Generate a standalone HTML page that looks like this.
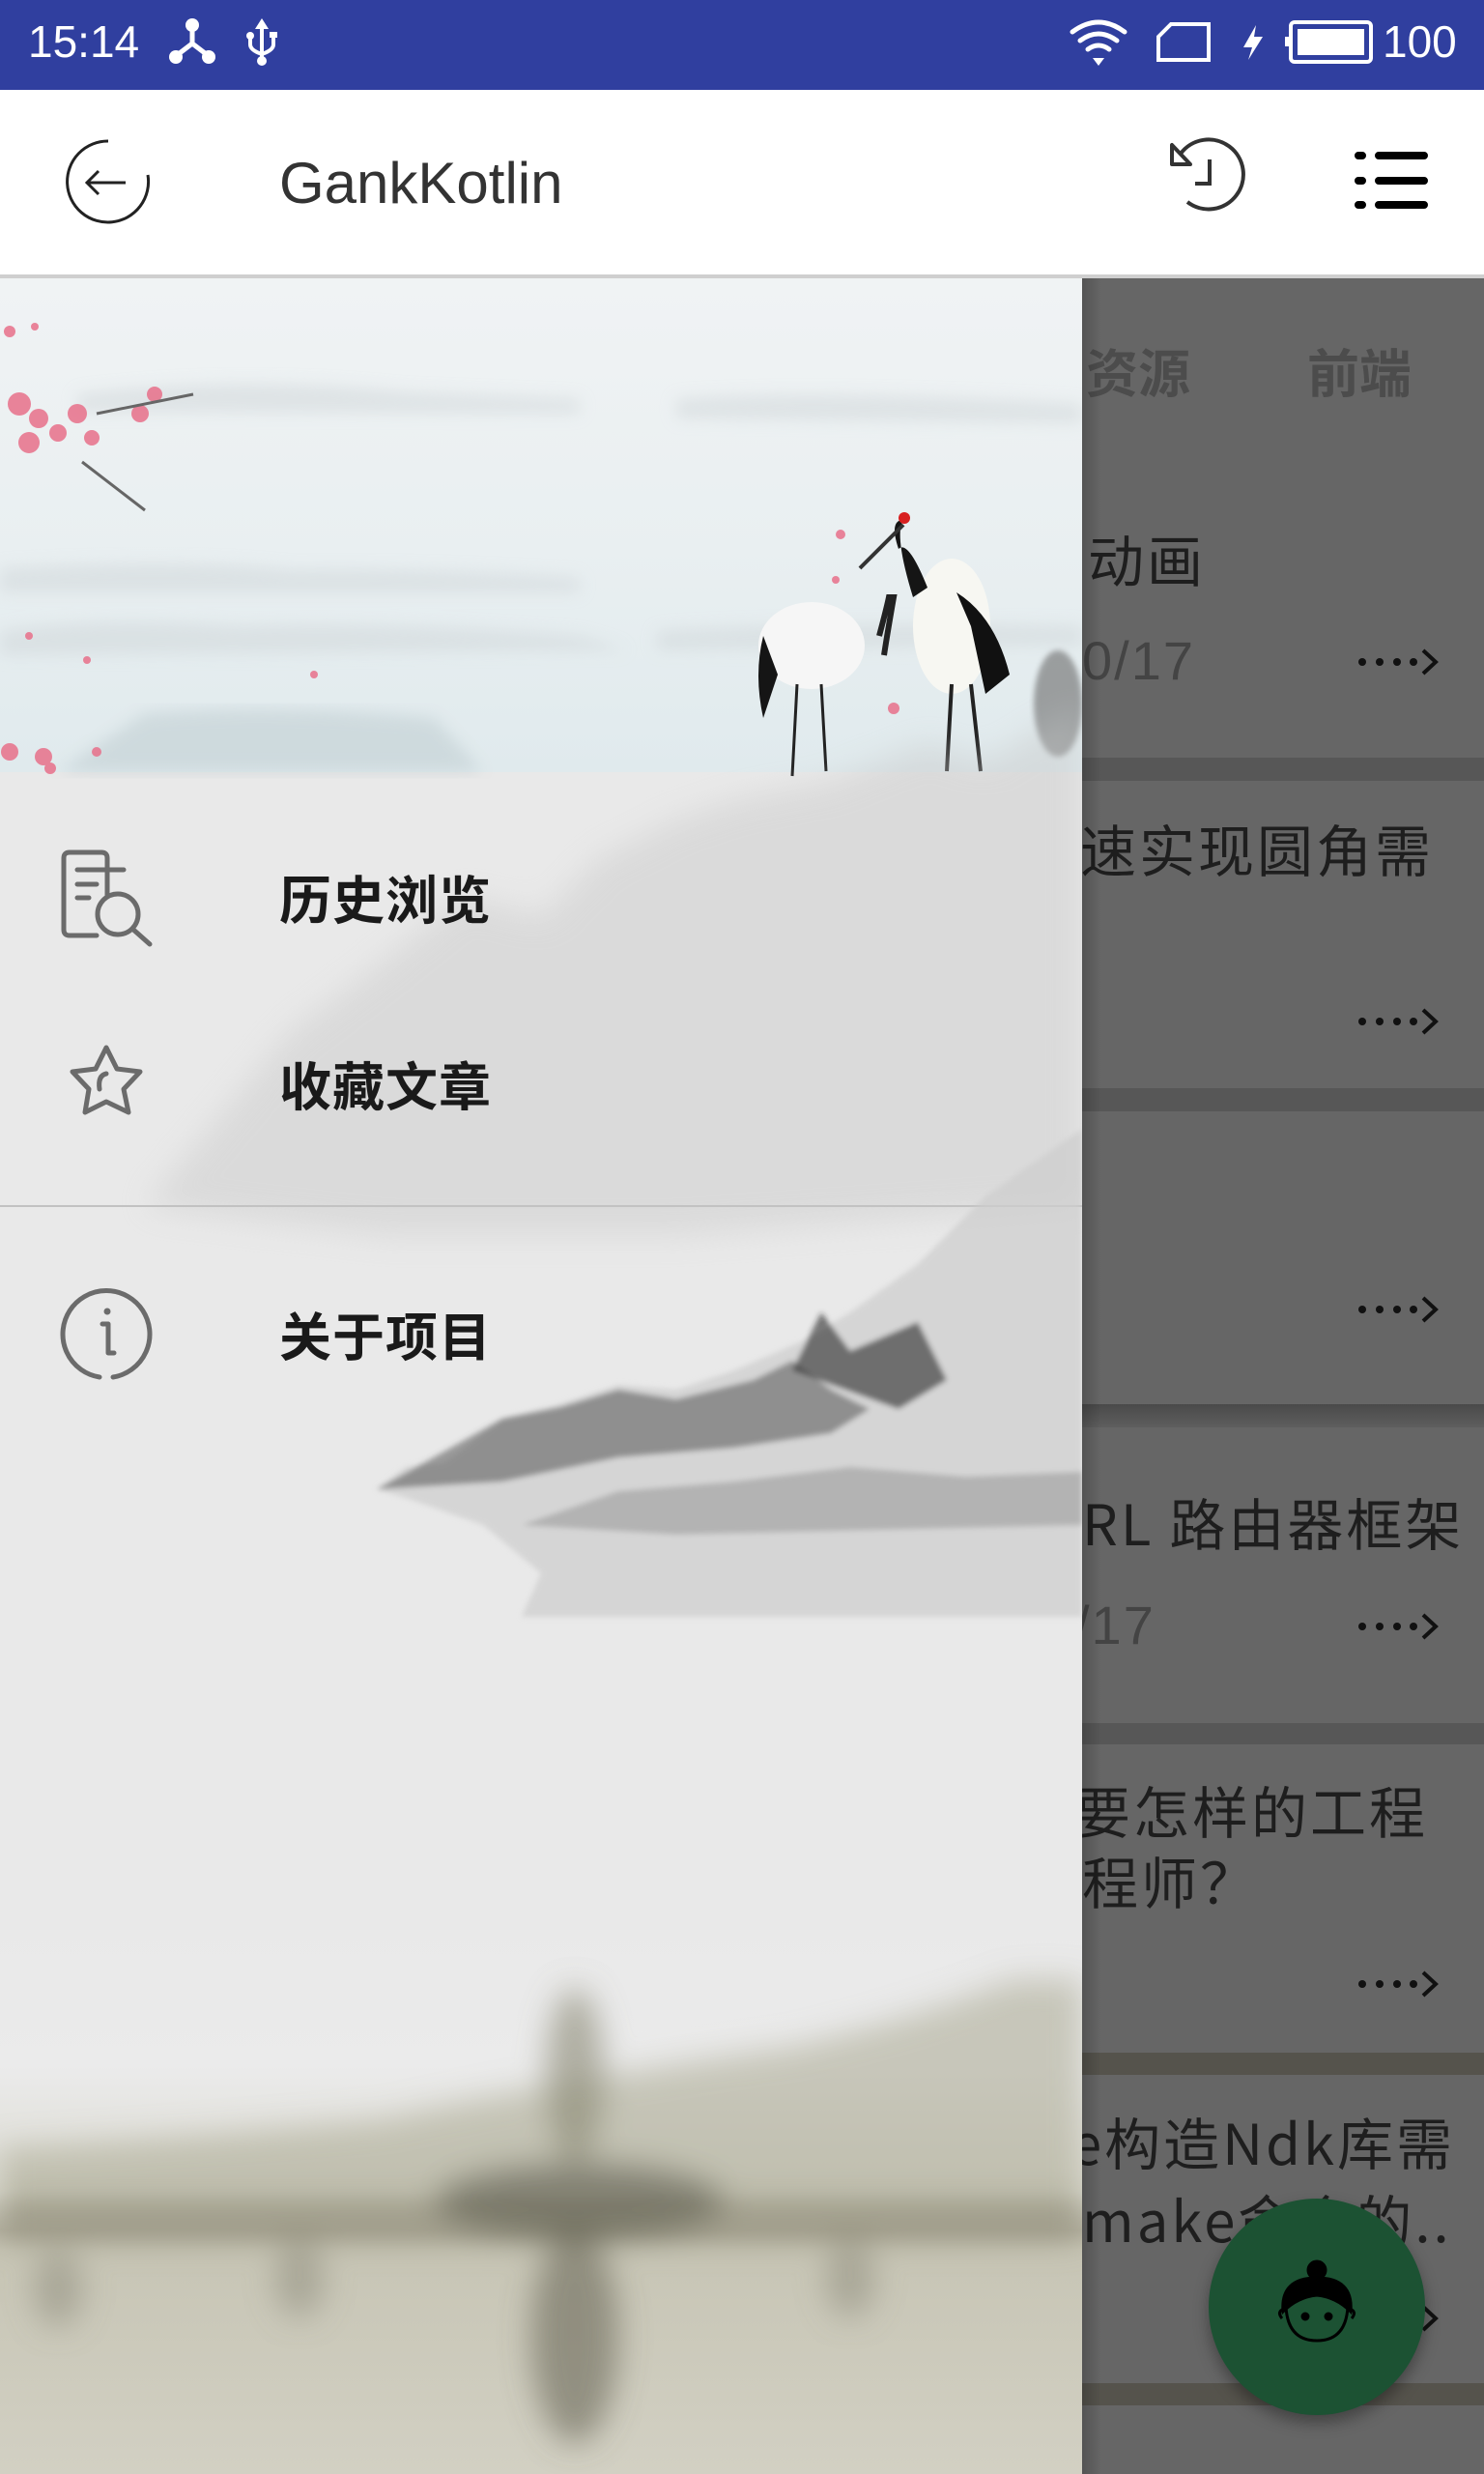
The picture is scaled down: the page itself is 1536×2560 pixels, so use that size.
<!DOCTYPE html>
<html><head><meta charset="utf-8">
<style>
*{margin:0;padding:0;box-sizing:border-box}
body{width:1536px;height:2560px;position:relative;overflow:hidden;background:#666;font-family:"Liberation Sans","Noto Sans CJK SC",sans-serif}
.a{position:absolute}
.cj{font-family:"Noto Sans CJK SC","WenQuanYi Zen Hei",sans-serif}
.t{color:#1e1e1e;font-size:58px;white-space:nowrap;line-height:1;letter-spacing:3px}
.d{color:#444;font-size:56px;white-space:nowrap;line-height:1;letter-spacing:2px}
.gap{left:1120px;width:416px;background:#575757}
.m{left:289px;font-size:54px;font-weight:bold;color:#1a1a1a;line-height:1;letter-spacing:1px}
</style></head><body>

<div class="a" style="left:1120px;top:288px;width:416px;height:2272px;background:#666"></div>
<div class="a cj" style="left:1124px;top:356px;font-size:54px;color:#4c4c4c;font-weight:bold;line-height:1">资源</div>
<div class="a cj" style="left:1353px;top:356px;font-size:54px;color:#4c4c4c;font-weight:bold;line-height:1">前端</div>

<div class="a gap" style="top:784px;height:24px"></div>
<div class="a gap" style="top:1126px;height:24px"></div>
<div class="a gap" style="top:1453px;height:24px;background:linear-gradient(#4a4a4a,#5e5e5e)"></div>
<div class="a gap" style="top:1783px;height:22px"></div>
<div class="a gap" style="top:2124px;height:23px;background:#55534c"></div>
<div class="a gap" style="top:2466px;height:23px;background:#55534c"></div>

<div class="a t cj" style="left:1126px;top:548px">动画</div>
<div class="a d" style="left:1120px;top:656px">0/17</div>
<div class="a t cj" style="left:1118px;top:848px">速实现圆角需</div>
<div class="a t cj" style="left:1120px;top:1545px">RL 路由器框架</div>
<div class="a d" style="left:1112px;top:1654px">/17</div>
<div class="a t cj" style="left:1112px;top:1843px">要怎样的工程</div>
<div class="a t cj" style="left:1120px;top:1916px">程师？</div>
<div class="a t cj" style="left:1108px;top:2186px">e构造Ndk库需</div>
<div class="a t cj" style="left:1120px;top:2266px">make命令的..</div>

<svg class="a" style="left:0;top:0" width="1536" height="2560">
<defs><g id="ar"><circle cx="4" cy="0" r="4"/><circle cx="22" cy="0" r="4"/><circle cx="40" cy="0" r="4"/><circle cx="57" cy="0" r="4"/><path d="M67 -12 L80 0 L67 12" fill="none" stroke="#111" stroke-width="4"/></g></defs>
<g fill="#111">
<use href="#ar" x="1406" y="685"/>
<use href="#ar" x="1406" y="1057"/>
<use href="#ar" x="1406" y="1355"/>
<use href="#ar" x="1406" y="1683"/>
<use href="#ar" x="1406" y="2053"/>
<use href="#ar" x="1406" y="2399"/>
</g>
</svg>

<div class="a" style="left:1120px;top:288px;width:20px;height:2272px;background:linear-gradient(90deg,rgba(0,0,0,.18),rgba(0,0,0,0))"></div>

<div class="a" style="left:0;top:288px;width:1120px;height:2272px;background:linear-gradient(#e9e9e9 0,#e9e9e9 1700px,#ebebeb 1850px,#dcdbd2 1980px,#b9b6a6 2020px,#c7c5b5 2040px,#d2d0c3 2272px);overflow:hidden">
 <div class="a" style="left:0;top:0;width:1120px;height:511px;background:linear-gradient(#f0f3f4,#e9eff1 55%,#e0eaed 100%)"></div>
 <svg class="a" style="left:0;top:0" width="1120" height="2272">
  <defs><filter id="b"><feGaussianBlur stdDeviation="8"/></filter><filter id="b2"><feGaussianBlur stdDeviation="16"/></filter><filter id="b3"><feGaussianBlur stdDeviation="3"/></filter></defs>
  <g filter="url(#b)" fill="#cfd5d8" opacity=".5">
   <path d="M80 120 Q250 100 420 118 L600 125 L600 140 L80 138Z"/>
   <path d="M700 125 Q850 115 1120 130 L1120 150 L700 145Z"/>
   <path d="M0 300 Q200 290 300 302 Q450 300 600 310 L600 325 L0 325Z"/>
   <path d="M0 365 Q100 350 250 360 Q400 355 600 370 L650 385 L0 390Z"/>
   <path d="M680 365 Q850 355 1120 360 L1120 380 L680 385Z"/>
  </g>
  <g filter="url(#b)" fill="#b8c6ca" opacity=".45"><path d="M150 450 Q300 440 450 455 L500 511 L60 511Z"/></g>
  <g fill="#e8708a" opacity=".85">
   <circle cx="20" cy="130" r="12"/><circle cx="40" cy="145" r="10"/><circle cx="30" cy="170" r="11"/><circle cx="60" cy="160" r="9"/><circle cx="80" cy="140" r="10"/><circle cx="95" cy="165" r="8"/><circle cx="145" cy="140" r="9"/><circle cx="160" cy="120" r="8"/><circle cx="10" cy="55" r="6"/><circle cx="36" cy="50" r="4"/>
   <circle cx="30" cy="370" r="4"/><circle cx="90" cy="395" r="4"/><circle cx="10" cy="490" r="9"/><circle cx="45" cy="495" r="9"/><circle cx="100" cy="490" r="5"/><circle cx="52" cy="507" r="6"/><circle cx="325" cy="410" r="4"/><circle cx="870" cy="265" r="5"/><circle cx="925" cy="445" r="6"/><circle cx="865" cy="312" r="4"/>
  </g>
  <path d="M100 140 L200 120 M85 190 L150 240" stroke="#666" stroke-width="3" fill="none"/>
  <g>
   <ellipse cx="840" cy="380" rx="55" ry="45" fill="#f6f6f6"/>
   <path d="M790 370 Q780 410 790 455 L805 410 Z" fill="#151515"/>
   <path d="M910 370 Q918 340 920 330 L925 330 Q918 370 915 390" stroke="#222" stroke-width="6" fill="none"/>
   <path d="M825 420 L820 515 M850 420 L855 510" stroke="#222" stroke-width="3"/>
   <ellipse cx="985" cy="360" rx="40" ry="70" fill="#f7f7f2"/>
   <path d="M990 325 Q1030 350 1045 410 L1020 430 L1005 360Z" fill="#111"/>
   <path d="M930 280 Q920 250 935 250 Q925 265 945 330 L960 320 Q940 270 930 280" fill="#151515"/>
   <path d="M935 255 L890 300" stroke="#333" stroke-width="4"/>
   <circle cx="936" cy="248" r="6" fill="#d82020"/>
   <path d="M985 420 L980 510 M1005 420 L1015 510" stroke="#222" stroke-width="4"/>
   <ellipse cx="1095" cy="440" rx="25" ry="55" fill="#6a6a6a" opacity=".6" filter="url(#b3)"/>
  </g>
  <g filter="url(#b2)" fill="#c4c4c4" opacity=".4">
   <path d="M150 960 L300 780 L380 720 L480 640 L560 660 L620 600 L700 560 L760 540 L860 520 L960 480 L1020 500 L1120 440 L1120 960 L700 990 L400 990Z"/>
  </g>
  <path d="M0 960 L1120 960" stroke="#c2c2c2" stroke-width="2"/>
  <g filter="url(#b3)">
   <path d="M390 1253 L420 1230 L460 1225 L520 1180 L580 1165 L640 1145 L700 1150 L760 1130 L830 1100 L880 1070 L950 1020 L1020 950 L1120 880 L1120 1385 L540 1385 L560 1340 L500 1290 L420 1262Z" fill="#cdcdcd" opacity=".7"/>
   <path d="M390 1253 L440 1225 L520 1180 L580 1168 L640 1150 L700 1160 L780 1140 L820 1120 L860 1150 L900 1170 L860 1195 L760 1210 L640 1220 L520 1245 Z" fill="#555" opacity=".55"/>
   <path d="M820 1130 L850 1070 L880 1110 L950 1080 L980 1140 L930 1170Z" fill="#2a2a2a" opacity=".6"/>
   <path d="M540 1290 L640 1255 L760 1245 L880 1230 L1000 1240 L1120 1235 L1120 1290 L700 1300Z" fill="#8a8a8a" opacity=".45"/>
  </g>
  <g filter="url(#b2)">
   <path d="M0 1935 Q200 1925 400 1905 Q600 1860 820 1830 Q950 1800 1050 1760 L1120 1760 L1120 2030 L0 2030Z" fill="#a9a792" opacity=".55"/>
   <rect x="0" y="1990" width="1120" height="40" fill="#8d8b78" opacity=".6"/>
   <ellipse cx="600" cy="1990" rx="150" ry="40" fill="#5e5c4e" opacity=".6"/>
   <ellipse cx="595" cy="2130" rx="45" ry="110" fill="#6a6858" opacity=".6"/>
   <ellipse cx="595" cy="1860" rx="30" ry="90" fill="#87856f" opacity=".6"/>
   <ellipse cx="60" cy="2080" rx="25" ry="40" fill="#8a8877" opacity=".5"/>
   <ellipse cx="310" cy="2070" rx="25" ry="40" fill="#8a8877" opacity=".5"/>
   <ellipse cx="880" cy="2070" rx="25" ry="40" fill="#8a8877" opacity=".5"/>
  </g>
 </svg>
</div>
<svg class="a" style="left:0;top:860px" width="200" height="600" fill="none" stroke="#6b6b6b" stroke-width="5" stroke-linecap="round" stroke-linejoin="round">
 <path d="M111 66 L111 28 Q111 22 105 22 L72 22 Q66 22 66 28 L66 102 Q66 108 72 108 L100 108"/>
 <path d="M80 40 L128 40 M80 55 L100 55 M80 69 L92 69" />
 <circle cx="122" cy="86" r="21"/><path d="M137 101 L155 117"/>
 <path d="M110 224 L121 246 L145 249 L128 267 L133 291 L110 280 L88 291 L92 267 L75 249 L99 246Z"/>
 <path d="M103 267 Q101 253 110 251"/>
 <path d="M103 565 A45 45 0 1 1 117 565" />
 <circle cx="111" cy="497" r="3.5" fill="#6b6b6b" stroke="none"/>
 <path d="M106 510 L112 510 L112 540 L118 540"/>
</svg>
<div class="a m cj" style="top:901px">历史浏览</div>
<div class="a m cj" style="top:1094px">收藏文章</div>
<div class="a m cj" style="top:1353px">关于项目</div>

<div class="a" style="left:1251px;top:2275px;width:224px;height:224px;border-radius:50%;background:#1c5233;box-shadow:0 8px 16px rgba(0,0,0,.35)"></div>
<svg class="a" style="left:1313px;top:2337px" width="100" height="100" fill="none" stroke="#000" stroke-width="3">
 <circle cx="50" cy="12" r="9" fill="#000"/>
 <path d="M15 55 Q12 20 50 20 Q88 20 85 55 Q70 40 50 38 Q30 40 15 55Z" fill="#000"/>
 <path d="M18 50 Q20 85 50 85 Q80 85 82 50"/>
 <path d="M16 52 Q8 55 14 62 M84 52 Q92 55 86 62"/>
 <circle cx="38" cy="60" r="3" fill="#000"/><circle cx="62" cy="60" r="3" fill="#000"/>
</svg>

<div class="a" style="left:0;top:0;width:1536px;height:93px;background:#303f9f"></div>
<div class="a" style="left:29px;top:20px;color:#fff;font-size:46px;line-height:1">15:14</div>
<svg class="a" style="left:0;top:0" width="1536" height="93" fill="#fff" stroke="#fff">
 <g stroke-width="5"><path d="M199 27 L199 45 L182 58 M199 45 L216 58" fill="none"/></g>
 <circle cx="199" cy="26" r="7" stroke="none"/><circle cx="182" cy="59" r="7" stroke="none"/><circle cx="216" cy="59" r="7" stroke="none"/>
 <g stroke-width="4" fill="none"><path d="M271 28 L271 63 M259 38 L259 46 Q259 52 271 56 Q283 52 283 46 L283 37"/></g>
 <path d="M264 30 L271 19 L278 30Z" stroke="none"/><circle cx="259" cy="37" r="4" stroke="none"/><rect x="279" y="33" width="8" height="6" stroke="none"/><circle cx="271" cy="63" r="5" stroke="none"/>
 <g fill="none" stroke-width="5" stroke-linecap="round"><path d="M1110 33 Q1137 13 1164 33"/><path d="M1118 42 Q1137 28 1156 42"/><path d="M1126 51 Q1137 43 1148 51"/></g>
 <path d="M1131 60 L1143 60 L1137 68Z" stroke="none"/>
 <path d="M1199 38 L1212 25 L1251 25 L1251 62 L1199 62Z" fill="none" stroke-width="4"/>
 <path d="M1300 26 L1287 49 L1296 49 L1292 62 L1307 38 L1298 38Z" stroke="none"/>
 <rect x="1336" y="23" width="83" height="41" rx="4" fill="none" stroke-width="4"/>
 <rect x="1343" y="30" width="69" height="27" stroke="none"/>
 <rect x="1330" y="38" width="6" height="10" stroke="none"/>
</svg>
<div class="a" style="left:1431px;top:20px;color:#fff;font-size:46px;line-height:1">100</div>

<div class="a" style="left:0;top:93px;width:1536px;height:191px;background:#fff"></div>
<div class="a" style="left:0;top:284px;width:1536px;height:4px;background:#cfcfcf"></div>
<svg class="a" style="left:0;top:93px" width="1536" height="191" fill="none" stroke="#222" stroke-width="3">
 <path d="M112 53 A42 42 0 1 0 153 88"/>
 <path d="M92 96 L130 96 M102 84 L90 96 L102 108"/>
 <g stroke="#333" stroke-width="4"><path d="M1229 116 A36 36 0 1 0 1222 66"/><path d="M1213 57 L1213 77 L1232 77Z" stroke-linejoin="round"/><path d="M1252 72 L1252 97 L1237 97"/></g>
 <g stroke="#000" stroke-width="8" stroke-linecap="round"><path d="M1406 68 L1410 68 M1427 68 L1474 68 M1406 94 L1410 94 M1427 94 L1474 94 M1406 119 L1410 119 M1427 119 L1474 119"/></g>
</svg>
<div class="a" style="left:289px;top:160px;color:#333;font-size:60px;line-height:1">GankKotlin</div>
</body></html>
